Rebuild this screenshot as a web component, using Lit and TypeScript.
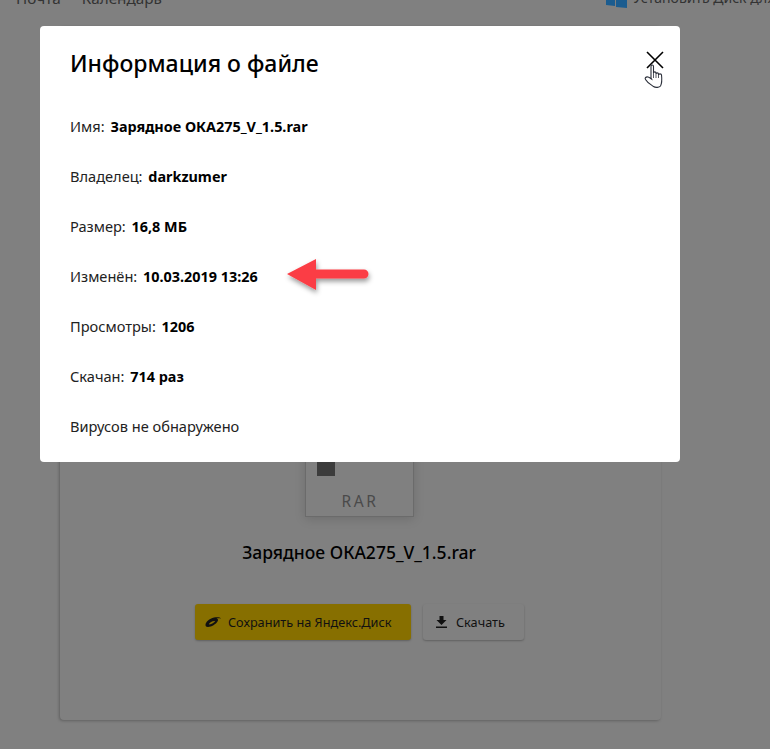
import { LitElement, html, css } from "lit";
import { customElement } from "lit/decorators.js";

const rows: [string, string][] = [
  ["Имя:", "Зарядное ОКА275_V_1.5.rar"],
  ["Владелец:", "darkzumer"],
  ["Размер:", "16,8 МБ"],
  ["Изменён:", "10.03.2019 13:26"],
  ["Просмотры:", "1206"],
  ["Скачан:", "714 раз"],
];

@customElement("app-root")
export class AppRoot extends LitElement {
  static styles = css`
    :host {
      display: block;
      position: relative;
      width: 770px;
      height: 749px;
      overflow: hidden;
      background: #808080;
      font-family: "Noto Sans", "Open Sans", sans-serif;
      color: #000;
    }
    .header {
      height: 26px;
      display: flex;
      align-items: flex-end;
      justify-content: space-between;
      overflow: hidden;
      padding: 0 0 18px 16px;
      box-sizing: border-box;
      font-size: 15.300px;
      line-height: 20px;
      color: #333;
    }
    .nav {
      display: flex;
      gap: 21px;
      height: 8px;
      align-items: flex-end;
    }
    .promo {
      display: flex;
      gap: 6px;
      height: 8px;
      align-items: flex-end;
      white-space: nowrap;
      width: 164px;
      overflow: hidden;
      flex: none;
      font-size: 14px;
    }
    .promo svg { flex: none; }
    .page {
      padding: 0 109px 0 60px;
    }
    .card {
      height: 694px;
      box-sizing: border-box;
      border-radius: 4px;
      box-shadow: -1px 1px 3px rgba(0, 0, 0, 0.25);
      display: flex;
      flex-direction: column;
      align-items: center;
      padding: 336px 3px 0 0;
    }
    .file {
      width: 109px;
      height: 155px;
      box-sizing: border-box;
      border: 1px solid #6b6b6b;
      box-shadow: 0 2px 10px rgba(0, 0, 0, 0.15);
      display: flex;
      flex-direction: column;
      justify-content: flex-end;
      align-items: center;
      padding-bottom: 5px;
      position: relative;
    }
    .file i {
      position: absolute;
      left: 11px;
      bottom: 40px;
      width: 18px;
      height: 14px;
      background: #3c3c3c;
    }
    .file span {
      font-size: 15.500px;
      letter-spacing: 2.600px;
      color: #4a4a4a;
      line-height: 20px;
      margin-right: -2px;
    }
    .name {
      margin: 23px 0 0 0;
      font-size: 17.500px;
      font-weight: 500;
      line-height: 24px;
      color: #000;
    }
    .actions {
      display: flex;
      gap: 12px;
      margin-top: 40px;
      align-self: flex-start;
      margin-left: 135px;
    }
    .btn {
      height: 36px;
      box-sizing: border-box;
      border-radius: 3px;
      display: flex;
      align-items: center;
      font-size: 12.700px;
      color: #111;
      box-shadow: 0 1px 2px rgba(0, 0, 0, 0.25);
      white-space: nowrap;
    }
    .save {
      width: 216px;
      background: #876f00;
      padding-left: 10px;
      gap: 7px;
    }
    .dl {
      width: 101px;
      padding-left: 13px;
      gap: 9px;
    }
    .modal {
      position: absolute;
      left: 40px;
      top: 26px;
      width: 640px;
      height: 436px;
      box-sizing: border-box;
      background: #fff;
      border-radius: 4px;
      padding: 20px 30px 0;
    }
    h2 {
      margin: 0 0 36px;
      font-size: 23px;
      font-weight: 500;
      line-height: 34px;
      color: #000;
    }
    .row {
      height: 50px;
      font-size: 14.600px;
      line-height: 20px;
      color: #222;
      white-space: nowrap;
    }
    .row b {
      font-size: 14.400px;
      font-weight: 700;
      color: #000;
      margin-left: 2px;
    }
    .close {
      position: absolute;
      right: 16px;
      top: 25px;
    }
    .cursor {
      position: absolute;
      left: 644px;
      top: 63px;
    }
    .arrow {
      position: absolute;
      left: 284px;
      top: 257px;
      overflow: visible;
    }
  `;

  render() {
    return html`
      <div class="header">
        <div class="nav"><span>Почта</span><span>Календарь</span></div>
        <div class="promo">
          <svg width="21" height="11" viewBox="0 0 21 11">
            <path d="M0 0h9v9l-9-1zM10 0h11v11l-11-1z" fill="#1b5c8f" />
          </svg>
          <span>Установить Диск для</span>
        </div>
      </div>
      <div class="page">
        <div class="card">
          <div class="file"><i></i><span>RAR</span></div>
          <div class="name">Зарядное ОКА275_V_1.5.rar</div>
          <div class="actions">
            <div class="btn save">
              <svg width="16" height="10" viewBox="0 0 16 10">
                <path
                  d="M.5 8c0-3 4-6.500 8.500-7.500 3-.6 6.500-.3 7 1-1.500-.4-3-.5-4.500 0 1.500.3 2 1.500 1 3C11 7 6.500 10 3 10 1.200 10 .5 9.200.5 8zM3.800 7.300c2 .5 5.200-1 6.400-3.200-2.200-.5-5.400 1-6.400 3.200z"
                  fill="#111"
                  fill-rule="evenodd"
                />
              </svg>
              <span>Сохранить на Яндекс.Диск</span>
            </div>
            <div class="btn dl">
              <svg width="11" height="12" viewBox="0 0 11 12">
                <path d="M3.500 0h4v4h3l-5 5-5-5h3zM0 10.500h11V12H0z" fill="#111" />
              </svg>
              <span>Скачать</span>
            </div>
          </div>
        </div>
      </div>
      <div class="modal">
        <h2>Информация о файле</h2>
        ${rows.map(([k, v]) => html`<div class="row">${k} <b>${v}</b></div>`)}
        <div class="row">Вирусов не обнаружено</div>
        <svg class="close" width="18" height="18" viewBox="0 0 18 18">
          <path d="M1 1l16 16M17 1L1 17" stroke="#000" stroke-width="1.600" fill="none" />
        </svg>
      </div>
      <svg class="cursor" width="22" height="26" viewBox="0 0 22 26">
        <path
          d="M7 15V3.500c0-2 2.500-2 2.500 0V10c0-1.500 2.500-1.500 2.500 0v1c0-1.500 2.500-1.500 2.500 0v1c0-1.500 3-1.500 3 0 .5 4 .5 8-1 11-1 1.500-5 2-7 .5-2-1.500-6-3.500-8-7-1-1.500 .5-3 2.500-2.500 1 .3 2 1 3.500 2z"
          fill="#fff"
          stroke="#2b2f3a"
          stroke-width="1.100"
        />
        <path d="M9.500 10v5M12 11v4M14.500 12v3" stroke="#2b2f3a" stroke-width="0.800" fill="none" />
      </svg>
      <svg class="arrow" width="86" height="36" viewBox="0 0 86 36">
        <defs>
          <filter id="sh" x="-20%" y="-30%" width="140%" height="170%">
            <feDropShadow dx="1" dy="3" stdDeviation="2.500" flood-color="#000" flood-opacity="0.4" />
          </filter>
        </defs>
        <path
          d="M3 17L32 2v10.500h48a3.500 3.500 0 0 1 0 9H32V33z"
          fill="#fb3e45"
          filter="url(#sh)"
        />
      </svg>
    `;
  }
}
